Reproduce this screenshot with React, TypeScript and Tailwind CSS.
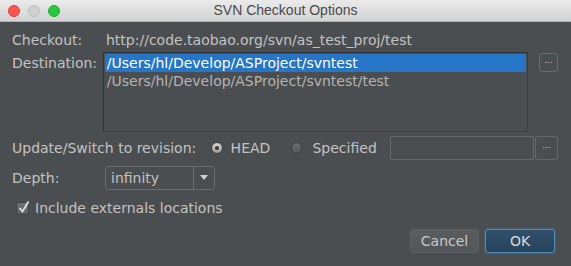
import React from "react";

const Dots = () => (
  <div className="flex items-center justify-center w-[19px] h-[19px] border border-[#6a6c6e] rounded-[3px] text-[#c8c8c8] text-[9px] leading-none pb-[4px]">
    ...
  </div>
);

export default function App() {
  return (
    <div
      className="w-[571px] h-[266px] bg-[#4b4e50] flex flex-col overflow-hidden text-[#c3c3c3]"
      style={{ fontFamily: '"DejaVu Sans", "Liberation Sans", sans-serif' }}
    >
      {/* title bar */}
      <div className="relative h-[22px] bg-gradient-to-b from-[#ebebeb] to-[#d3d3d3] border-b border-[#b3b3b3] flex items-center justify-center">
        <div className="absolute left-[8px] top-[5px] flex gap-[8px]">
          <div className="w-[12px] h-[12px] rounded-full bg-[#fc5753] border border-[#df3e3a]" />
          <div className="w-[12px] h-[12px] rounded-full bg-[#d0d0d0] border border-[#bdbdbd]" />
          <div className="w-[12px] h-[12px] rounded-full bg-[#29c940] border border-[#1eac2c]" />
        </div>
        <span
          className="text-[14px] text-[#4a4a4a]"
          style={{ fontFamily: '"Liberation Sans", Arial, sans-serif' }}
        >
          SVN Checkout Options
        </span>
      </div>

      <div className="flex flex-col pl-[12px] pr-[13px] text-[14px]">
        {/* checkout */}
        <div className="flex items-center h-[18px] mt-[9px]">
          <span className="w-[94px]">Checkout:</span>
          <span>http://code.taobao.org/svn/as_test_proj/test</span>
        </div>

        {/* destination */}
        <div className="flex mt-[3px]">
          <span className="w-[91px] pt-[1px]">Destination:</span>
          <div className="w-[426px] h-[80px] border border-[#2f3133] border-r-[#3c3e40] border-b-[#3c3e40] flex flex-col pt-[1px] px-[1px]">
            <div className="h-[18px] bg-[#2675c6] text-white flex items-center pl-[2px]">
              /Users/hl/Develop/ASProject/svntest
            </div>
            <div className="h-[18px] flex items-center pl-[2px] text-[#b4b4b4]">
              /Users/hl/Develop/ASProject/svntest/test
            </div>
          </div>
          <div className="ml-[11px] mt-[1px]">
            <Dots />
          </div>
        </div>

        {/* revision */}
        <div className="flex items-center mt-[4px] h-[24px]">
          <span className="w-[199px]">Update/Switch to revision:</span>
          <div className="w-[12px] h-[12px] rounded-full bg-gradient-to-b from-[#d8d8d8] to-[#9a9a9a] border border-[#3b3d3f] flex items-center justify-center">
            <div className="w-[4px] h-[4px] rounded-full bg-[#3a3a3a]" />
          </div>
          <span className="ml-[8px] w-[60px]">HEAD</span>
          <div className="w-[12px] h-[12px] rounded-full bg-gradient-to-b from-[#6a6c6e] to-[#55585a] border border-[#3b3d3f]" />
          <span className="ml-[10px] w-[78px]">Specified</span>
          <div className="w-[144px] h-[24px] border border-[#65676a] bg-[#4b4e50]" />
          <div className="ml-[1px] w-[23px] h-[24px] border border-[#65676a] rounded-[2px] flex items-center justify-center text-[9px] pb-[4px] text-[#c8c8c8]">
            ...
          </div>
        </div>

        {/* depth */}
        <div className="flex items-center mt-[6px] h-[24px]">
          <span className="w-[93px]">Depth:</span>
          <div className="w-[110px] h-[24px] border border-[#6a6c6e] rounded-[3px] flex">
            <span className="flex-1 pl-[5px] flex items-center">infinity</span>
            <div className="w-[21px] border-l border-[#6a6c6e] flex items-center justify-center">
              <svg width="8" height="6" viewBox="0 0 8 6">
                <path d="M0 0 L8 0 L4 5 Z" fill="#d0d0d0" />
              </svg>
            </div>
          </div>
        </div>

        {/* checkbox */}
        <div className="flex items-center mt-[9px] h-[18px] pl-[4px]">
          <div className="relative w-[13px] h-[13px] rounded-[2px] bg-gradient-to-b from-[#707274] to-[#5c5e60] border border-[#3e4042]">
            <svg className="absolute left-[1px] top-[-3px]" width="12" height="14" viewBox="0 0 12 14">
              <path d="M1.5 8 L4.5 11.5 L10.5 1.5" stroke="#e0e0e0" strokeWidth="1.8" fill="none" />
            </svg>
          </div>
          <span className="ml-[6px]">Include externals locations</span>
        </div>

        {/* buttons */}
        <div className="flex justify-end mt-[12px] gap-[6px] pr-[3px]">
          <div className="w-[69px] h-[24px] rounded-[3px] border border-[#5e6163] bg-gradient-to-b from-[#5a5d60] to-[#535659] flex items-center justify-center text-[#c8c8c8]">
            Cancel
          </div>
          <div className="w-[70px] h-[24px] rounded-[3px] border border-[#4f8ec0] bg-gradient-to-b from-[#2f4f6a] to-[#28445c] flex items-center justify-center text-[#dcdcdc] shadow-[0_0_2px_#3c7fb5]">
            OK
          </div>
        </div>
      </div>
    </div>
  );
}
